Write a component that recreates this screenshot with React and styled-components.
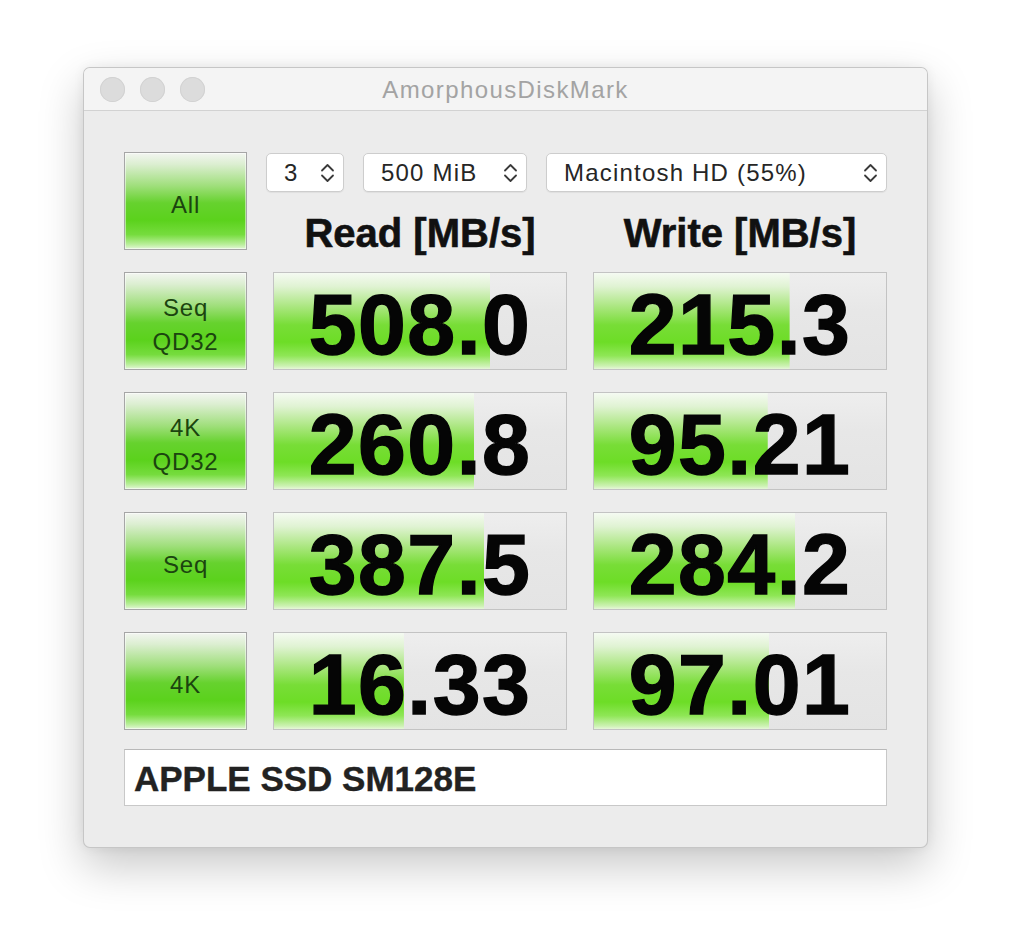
import React from 'react';
import styled, { createGlobalStyle } from 'styled-components';

const GlobalStyle = createGlobalStyle`
  html, body {
    margin: 0;
    padding: 0;
    background: #ffffff;
  }
  body {
    font-family: "Liberation Sans", Arial, sans-serif;
  }
`;

const Page = styled.div`
  width: 1012px;
  height: 948px;
  padding: 67px 0 0 83px;
  box-sizing: border-box;
  background: #ffffff;
`;

const Window = styled.div`
  width: 845px;
  height: 781px;
  box-sizing: border-box;
  border: 1px solid rgba(0, 0, 0, 0.16);
  border-radius: 7px;
  background: #ececec;
  overflow: hidden;
  box-shadow: 0 18px 45px rgba(0, 0, 0, 0.22), 0 0 12px rgba(0, 0, 0, 0.06);
  display: flex;
  flex-direction: column;
`;

const TitleBar = styled.div`
  height: 43px;
  box-sizing: border-box;
  display: grid;
  grid-template-columns: 1fr auto 1fr;
  align-items: center;
  padding: 0 16px;
  background: #f4f4f4;
  border-bottom: 1px solid #d2d2d2;
`;

const Lights = styled.div`
  display: flex;
  gap: 15px;
`;

const Light = styled.span`
  width: 25px;
  height: 25px;
  border-radius: 50%;
  background: #dcdcdc;
  box-shadow: inset 0 0 0 1px #d2d2d2;
`;

const Title = styled.div`
  font-size: 24px;
  letter-spacing: 1.4px;
  color: #a3a3a3;
  padding-top: 1px;
`;

const Content = styled.div`
  padding: 41px 41px 0 40px;
`;

const Grid = styled.div`
  display: grid;
  grid-template-columns: 123px 294px 294px;
  grid-auto-rows: 98px;
  column-gap: 26px;
  row-gap: 22px;
`;

const LabelButton = styled.div`
  box-sizing: border-box;
  border: 1px solid #a6a6a6;
  background: linear-gradient(
    to bottom,
    #f3f6f1 0%,
    #dbeed0 12%,
    #a0df7c 34%,
    #66d22e 52%,
    #5bd21c 70%,
    #76dc3e 85%,
    #b8ee98 95%,
    #e2f6d6 100%
  );
  box-shadow: inset 0 0 0 1px rgba(255, 255, 255, 0.5);
  display: flex;
  flex-direction: column;
  align-items: center;
  justify-content: center;
  padding-top: 8px;
  font-size: 24px;
  letter-spacing: 0.8px;
  line-height: 34px;
  color: #1b440f;
`;

const HeaderCell = styled.div`
  grid-column: 2 / 4;
  display: flex;
  flex-direction: column;
  padding-top: 1px;
`;

const SelectRow = styled.div`
  display: flex;
  gap: 19px;
  margin-left: -7px;
`;

const Select = styled.div`
  width: ${(p) => p.$w}px;
  height: 39px;
  box-sizing: border-box;
  display: flex;
  align-items: center;
  justify-content: space-between;
  padding: 0 8px 0 17px;
  background: #ffffff;
  border: 1px solid #cdcdcd;
  border-radius: 5px;
  box-shadow: 0 1px 1px rgba(0, 0, 0, 0.06);
  font-size: 24px;
  letter-spacing: 1.2px;
  color: #262626;
`;

const Headings = styled.div`
  display: grid;
  grid-template-columns: 294px 294px;
  column-gap: 26px;
  margin-top: 21px;
`;

const Heading = styled.div`
  text-align: center;
  font-size: 40px;
  line-height: 40px;
  font-weight: bold;
  color: #111111;
  -webkit-text-stroke: 0.6px #111111;
`;

const ResultCell = styled.div`
  box-sizing: border-box;
  border: 1px solid #c3c3c3;
  background:
    linear-gradient(
        to bottom,
        #f5faf2 0%,
        #e0f3d3 14%,
        #a8e67c 36%,
        #78dd37 54%,
        #6ddd26 72%,
        #8ee655 86%,
        #cdf2b4 97%,
        #e6f6da 100%
      )
      0 0 / ${(p) => p.$fill}% 100% no-repeat,
    linear-gradient(to bottom, #eeeeee 0%, #e7e7e7 40%, #e4e4e4 100%);
  display: flex;
  align-items: center;
  justify-content: center;
  padding-top: 5px;
  font-size: 86px;
  line-height: 1;
  font-weight: bold;
  letter-spacing: 1.5px;
  color: #050505;
  -webkit-text-stroke: 1.4px #050505;
`;

const DeviceField = styled.div`
  margin-top: 19px;
  height: 57px;
  width: 763px;
  box-sizing: border-box;
  background: #ffffff;
  border: 1px solid #c8c8c8;
  border-top-color: #b8b8b8;
  display: flex;
  align-items: center;
  padding: 2px 0 0 9px;
  font-size: 35px;
  font-weight: bold;
  color: #222222;
  -webkit-text-stroke: 0.4px #222222;
`;

function Chevrons() {
  return (
    <svg width="15" height="24" viewBox="0 0 15 24" fill="none">
      <path d="M2 9.5 L7.5 4 L13 9.5" stroke="#3a3a3a" strokeWidth="1.8" strokeLinecap="round" strokeLinejoin="round" />
      <path d="M2 14.5 L7.5 20 L13 14.5" stroke="#3a3a3a" strokeWidth="1.8" strokeLinecap="round" strokeLinejoin="round" />
    </svg>
  );
}

const rows = [
  { label: ['Seq', 'QD32'], read: '508.0', readFill: 74, write: '215.3', writeFill: 67 },
  { label: ['4K', 'QD32'], read: '260.8', readFill: 68.5, write: '95.21', writeFill: 59.5 },
  { label: ['Seq'], read: '387.5', readFill: 72, write: '284.2', writeFill: 69 },
  { label: ['4K'], read: '16.33', readFill: 44.5, write: '97.01', writeFill: 60 },
];

export default function App() {
  return (
    <>
      <GlobalStyle />
      <Page>
        <Window>
          <TitleBar>
            <Lights>
              <Light />
              <Light />
              <Light />
            </Lights>
            <Title>AmorphousDiskMark</Title>
            <div />
          </TitleBar>
          <Content>
            <Grid>
              <LabelButton>All</LabelButton>
              <HeaderCell>
                <SelectRow>
                  <Select $w={78}>
                    <span>3</span>
                    <Chevrons />
                  </Select>
                  <Select $w={164}>
                    <span>500 MiB</span>
                    <Chevrons />
                  </Select>
                  <Select $w={341}>
                    <span>Macintosh HD (55%)</span>
                    <Chevrons />
                  </Select>
                </SelectRow>
                <Headings>
                  <Heading>Read [MB/s]</Heading>
                  <Heading>Write [MB/s]</Heading>
                </Headings>
              </HeaderCell>
              {rows.map((r) => (
                <React.Fragment key={r.label.join('-')}>
                  <LabelButton>
                    {r.label.map((l) => (
                      <span key={l}>{l}</span>
                    ))}
                  </LabelButton>
                  <ResultCell $fill={r.readFill}>{r.read}</ResultCell>
                  <ResultCell $fill={r.writeFill}>{r.write}</ResultCell>
                </React.Fragment>
              ))}
            </Grid>
            <DeviceField>APPLE SSD SM128E</DeviceField>
          </Content>
        </Window>
      </Page>
    </>
  );
}
